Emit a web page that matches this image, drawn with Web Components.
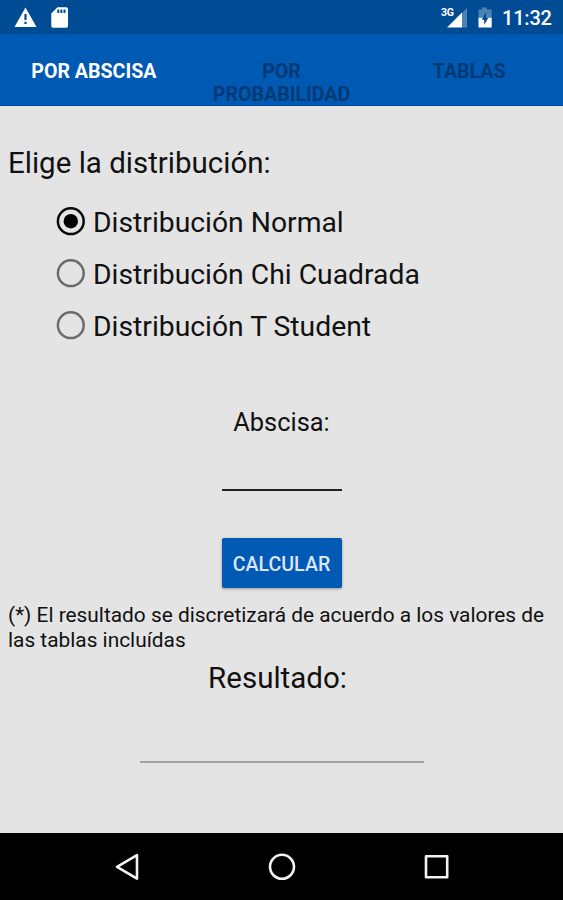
<!DOCTYPE html>
<html lang="es">
<head>
<meta charset="utf-8">
<title>Distribuciones</title>
<style>
    body{
        margin:0;
        background:#e4e4e4;
    }
</style>
</head>
<body>
<stats-app></stats-app>
<script>
class StatusBar extends HTMLElement{
    constructor(){
        super()
        this._shadowRoot = this.attachShadow({mode:'open'})
    }
    connectedCallback(){
        this._shadowRoot.innerHTML=`
        <style>
            :host{
                display:flex;
                justify-content:space-between;
                height:34px;
                background:#004c94;
                color:#fff;
            }
            .group{
                display:flex;
            }
            svg{
                display:block;
                fill:#fff;
            }
            .signal{
                display:flex;
                width:36px;
            }
            .net{
                width:13px;
                margin-right:-8px;
                font-size:10.5px;
                font-weight:700;
                line-height:12px;
                padding-top:7px;
                letter-spacing:-.2px;
            }
            .time{
                width:61px;
                font-size:20px;
                font-weight:500;
                line-height:37px;
                letter-spacing:-.2px;
            }
        </style>
        <div class="group">
            <svg width="80" height="34" viewBox="0 0 80 34">
                <path fill-rule="evenodd" d="M25.5 7.5L36.5 27H14.5ZM24.4 14V20H26.6V14ZM24.4 21.8V24H26.6V21.8Z"/>
                <path fill-rule="evenodd" d="M57.5 7.3H66.2Q68 7.3 68 9V26Q68 27.7 66.3 27.7H53Q51.3 27.7 51.3 26V13.5ZM57.3 9.5V13H59.3V9.5ZM60.4 9.5V13H62.4V9.5ZM63.5 9.5V13H65.5V9.5Z"/>
            </svg>
        </div>
        <div class="group">
            <div class="signal">
                <span class="net">3G</span>
                <svg width="22" height="34" viewBox="0 0 22 34">
                    <path opacity=".3" d="M21 8V27.5H16V13Z"/>
                    <path d="M16 12.5V27.5H1Z"/>
                </svg>
            </div>
            <svg width="25" height="34" viewBox="0 0 25 34">
                <path opacity=".3" d="M5 7.5H10V9.5H14.7V18H1.5V9.5H5Z"/>
                <path d="M1.5 17.8H14.7V27.5H1.5Z"/>
                <path fill="#004c94" d="M9 12V17.8H11.3L7.2 25V19.8H4.8Z"/>
            </svg>
            <span class="time">11:32</span>
        </div>
        `
    }
}

class TabItem extends HTMLElement{
    constructor(){
        super()
        this._shadowRoot = this.attachShadow({mode:'open'})
    }
    connectedCallback(){
        this._shadowRoot.innerHTML=`
        <style>
            :host{
                display:block;
                flex:1;
                box-sizing:border-box;
                padding:26px 20px 0;
                text-align:center;
                font-size:19.6px;
                font-weight:700;
                line-height:23px;
                color:#003a74;
                cursor:pointer;
            }
            :host([active]){
                color:#fff;
            }
        </style>
        <slot></slot>
        `
    }
}

class TabBar extends HTMLElement{
    constructor(){
        super()
        this._shadowRoot = this.attachShadow({mode:'open'})
    }
    connectedCallback(){
        this._shadowRoot.innerHTML=`
        <style>
            :host{
                display:flex;
                height:72px;
                box-sizing:border-box;
                background:#0059b3;
                border-bottom:1px solid #0048a4;
            }
        </style>
        <slot></slot>
        `
    }
}

class RadioOption extends HTMLElement{
    constructor(){
        super()
        this._shadowRoot = this.attachShadow({mode:'open'})
    }
    connectedCallback(){
        const checked = this.hasAttribute('checked')
        this._shadowRoot.innerHTML=`
        <style>
            :host{
                display:flex;
                align-items:center;
                height:52px;
                padding-left:56px;
                font-size:28.3px;
                cursor:pointer;
            }
            svg{
                display:block;
                margin-right:7px;
                margin-top:-3px;
                fill:none;
                stroke:${checked ? '#0a0a0a' : '#6b6b6b'};
            }
            .dot{
                fill:#000;
                stroke:none;
            }
        </style>
        <svg width="30" height="30" viewBox="0 0 30 30">
            <circle cx="14.8" cy="15.2" r="12.9" stroke-width="2.5"/>
            ${checked ? '<circle class="dot" cx="14.8" cy="15.2" r="7.2"/>' : ''}
        </svg>
        <span><slot></slot></span>
        `
    }
}

class TextLine extends HTMLElement{
    constructor(){
        super()
        this._shadowRoot = this.attachShadow({mode:'open'})
    }
    connectedCallback(){
        this._shadowRoot.innerHTML=`
        <style>
            :host{
                display:block;
                box-sizing:border-box;
                width:120px;
                height:52px;
                margin:0 auto;
                border-bottom:2px solid #202020;
            }
            :host([disabled]){
                width:284px;
                border-color:#a2a2a2;
            }
        </style>
        `
    }
}

class RaisedButton extends HTMLElement{
    constructor(){
        super()
        this._shadowRoot = this.attachShadow({mode:'open'})
    }
    connectedCallback(){
        this._shadowRoot.innerHTML=`
        <style>
            :host{
                display:block;
                width:120px;
                height:50px;
                margin:0 auto;
                border-radius:2px;
                background:#0059b3;
                box-shadow:0 1px 3px rgba(0,0,0,.35);
                color:#dce6f8;
                font-size:19.6px;
                font-weight:500;
                line-height:53px;
                text-align:center;
                white-space:nowrap;
                cursor:pointer;
            }
        </style>
        <slot></slot>
        `
    }
}

class NavBar extends HTMLElement{
    constructor(){
        super()
        this._shadowRoot = this.attachShadow({mode:'open'})
    }
    connectedCallback(){
        this._shadowRoot.innerHTML=`
        <style>
            :host{
                display:flex;
                justify-content:center;
                align-items:center;
                gap:125px;
                height:67px;
                background:#000;
            }
            svg{
                display:block;
                fill:none;
                stroke:#f2f2f2;
                stroke-width:2.6;
                stroke-linejoin:round;
            }
        </style>
        <svg width="30" height="30" viewBox="0 0 30 30"><path d="M25 3.2V26.6L5 14.9Z"/></svg>
        <svg width="30" height="30" viewBox="0 0 30 30"><circle cx="15" cy="14.8" r="12"/></svg>
        <svg width="30" height="30" viewBox="0 0 30 30"><path d="M4 4.2H25.2V25.2H4Z"/></svg>
        `
    }
}

class StatsApp extends HTMLElement{
    constructor(){
        super()
        this._shadowRoot = this.attachShadow({mode:'open'})
    }
    connectedCallback(){
        this._shadowRoot.innerHTML=`
        <style>
            :host{
                display:flex;
                flex-direction:column;
                height:900px;
                background:#e4e4e4;
                color:#111;
                font-family:Roboto, sans-serif;
            }
            main{
                flex:1;
                padding:0 8px;
            }
            .title{
                margin-top:39px;
                font-size:29.5px;
                line-height:36px;
            }
            .options{
                margin:15px -8px 0;
            }
            .label{
                margin-top:52px;
                font-size:25.4px;
                line-height:36px;
                text-align:center;
            }
            .abscisa{
                margin-bottom:47px;
                height:51px;
            }
            .note{
                margin:15px -8px 0 0;
                font-size:20.86px;
                line-height:24.5px;
            }
            .result{
                margin-top:8px;
                margin-left:-8px;
                font-size:29.5px;
                line-height:36px;
                text-align:center;
            }
            .output{
                margin-top:15px;
            }
        </style>
        <status-bar></status-bar>
        <tab-bar>
            <tab-item active>POR ABSCISA</tab-item>
            <tab-item>POR PROBABILIDAD</tab-item>
            <tab-item>TABLAS</tab-item>
        </tab-bar>
        <main>
            <div class="title">Elige la distribución:</div>
            <div class="options">
                <radio-option checked>Distribución Normal</radio-option>
                <radio-option>Distribución Chi Cuadrada</radio-option>
                <radio-option>Distribución T Student</radio-option>
            </div>
            <div class="label">Abscisa:</div>
            <text-line class="abscisa"></text-line>
            <raised-button>CALCULAR</raised-button>
            <div class="note">(*) El resultado se discretizará de acuerdo a los valores de<br>las tablas incluídas</div>
            <div class="result">Resultado:</div>
            <text-line class="output" disabled></text-line>
        </main>
        <nav-bar></nav-bar>
        `
    }
}

window.customElements.define('status-bar',StatusBar)
window.customElements.define('tab-item',TabItem)
window.customElements.define('tab-bar',TabBar)
window.customElements.define('radio-option',RadioOption)
window.customElements.define('text-line',TextLine)
window.customElements.define('raised-button',RaisedButton)
window.customElements.define('nav-bar',NavBar)
window.customElements.define('stats-app',StatsApp)
</script>
</body>
</html>
